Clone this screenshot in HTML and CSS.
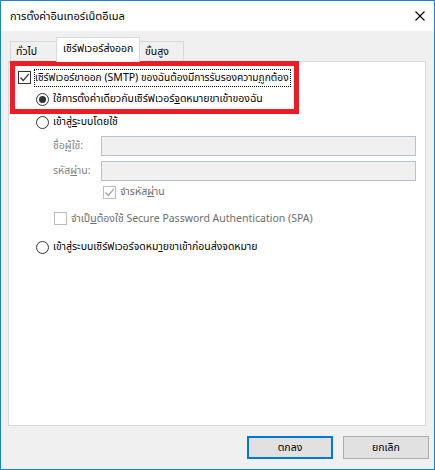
FILE: index.html
```html
<!DOCTYPE html>
<html lang="th">
<head>
<meta charset="utf-8">
<title>การตั้งค่าอินเทอร์เน็ตอีเมล</title>
<link rel="stylesheet" href="styles.css">
</head>
<body>
<div class="window">
  <div class="titlebar">
    <span class="title">การตั้งค่าอินเทอร์เน็ตอีเมล</span>
    <svg class="close" width="10" height="10" viewBox="0 0 10 10"><path d="M0.5 0.5 L9.5 9.5 M9.5 0.5 L0.5 9.5" stroke="#000" stroke-width="1.1" fill="none"/></svg>
  </div>
  <div class="body">
    <div class="tabs">
      <div class="tab first">ทั่วไป</div>
      <div class="tab selected">เซิร์ฟเวอร์ส่งออก</div>
      <div class="tab last">ขั้นสูง</div>
    </div>
    <div class="panel">
      <div class="row r1">
        <span class="cb checked"><svg width="11" height="11" viewBox="0 0 11 11"><path d="M1.5 5.5 L4.3 8.5 L9.8 1.8" stroke="#333" stroke-width="1.2" fill="none"/></svg></span>
        <span class="label focus">เซิร์ฟเวอร์ขาออก<span class="latin"> (SMTP) </span>ของฉันต้องมีการรับรองความ<u>ถ</u>ูกต้อง</span>
      </div>
      <div class="row r2 indent1">
        <span class="radio on"><span class="dot"></span></span>
        <span class="label">ใช้การตั้งค่าเดียวกับเซิร์ฟเวอร์<u>จ</u>ดหมายขาเข้าของฉัน</span>
      </div>
      <div class="row r3 indent1">
        <span class="radio"></span>
        <span class="label">เข้าสู่<u>ร</u>ะบบโดยใช้</span>
      </div>
      <div class="field f1">
        <span class="flabel">ชื่อ<u>ผู</u>้ใช้:</span>
        <span class="input"></span>
      </div>
      <div class="field f2">
        <span class="flabel">รหัส<u>ผ่</u>าน:</span>
        <span class="input"></span>
      </div>
      <div class="row r4 indent3">
        <span class="cb disabled"><svg width="11" height="11" viewBox="0 0 11 11"><path d="M1.5 5.5 L4.3 8.5 L9.8 1.8" stroke="#a3a3a3" stroke-width="1.2" fill="none"/></svg></span>
        <span class="label">จำรหัส<u>ผ่</u>าน</span>
      </div>
      <div class="row r5 indent2">
        <span class="cb disabled"></span>
        <span class="label gray">จำเป็<u>น</u>ต้องใช้<span class="latin"> Secure Password Authentication (SPA)</span></span>
      </div>
      <div class="row r6 indent1">
        <span class="radio"></span>
        <span class="label">เข้าสู่ระบบเซิร์ฟเวอร์จดหม<u>า</u>ยขาเข้าก่อนส่งจดหมาย</span>
      </div>
    </div>
    <div class="buttons">
      <div class="btn default">ตกลง</div>
      <div class="btn">ยกเลิก</div>
    </div>
  </div>
  <div class="highlight"></div>
</div>
</body>
</html>
```
FILE: styles.css
```css
* { box-sizing: border-box; }
html, body { margin: 0; padding: 0; background: #fff; }
body {
  font-family: "Noto Sans Thai", "Noto Sans", "DejaVu Sans", sans-serif;
  font-size: 10.5px;
  color: #000;
}
.latin { font-family: "Noto Sans", "DejaVu Sans", sans-serif; font-size: 10.5px; }
.window {
  position: relative;
  width: 435px;
  height: 470px;
  border: 1px solid #1883d7;
  display: flex;
  flex-direction: column;
  background: #f0f0f0;
}
.titlebar {
  height: 30px;
  background: #fff;
  display: flex;
  align-items: center;
  justify-content: space-between;
  padding: 0 9px 0 9px;
  flex: none;
}
.title { font-size: 11px; }
.body {
  flex: 1;
  display: flex;
  flex-direction: column;
  padding: 0 8px 0 7px;
}
.tabs {
  display: flex;
  align-items: flex-end;
  height: 30px;
  padding-left: 2px;
  flex: none;
}
.tab {
  height: 20px;
  border: 1px solid #d9d9d9;
  border-bottom: none;
  background: #f0f0f0;
  display: flex;
  align-items: center;
  padding: 0 0 0 5px;
  white-space: nowrap;
  flex: none;
}
.tab.first { width: 46px; border-right: none; }
.tab.selected {
  height: 25px;
  width: 84px;
  background: #fff;
  position: relative;
  top: 1px;
  padding: 0 0 3px 6px;
  z-index: 1;
}
.tab.last { width: 44px; border-left: none; }
.panel {
  height: 365px;
  background: #fff;
  border: 1px solid #d9d9d9;
  display: flex;
  flex-direction: column;
  padding: 9px 0 0 9px;
  flex: none;
}
.row {
  display: flex;
  align-items: center;
  height: 13px;
}
.indent1 { padding-left: 18px; }
.indent2 { padding-left: 36px; }
.indent3 { padding-left: 85px; }
.r2 { margin-top: 9px; }
.r3 { margin-top: 10px; }
.r4 { margin-top: 5px; }
.r5 { margin-top: 13px; }
.r6 { margin-top: 16px; }
.cb {
  width: 13px;
  height: 13px;
  border: 1px solid #333;
  background: #fff;
  flex: none;
  display: flex;
  align-items: center;
  justify-content: center;
}
.cb.disabled { border-color: #bcbcbc; }
.radio {
  width: 13px;
  height: 13px;
  border: 1px solid #333;
  border-radius: 50%;
  flex: none;
  display: flex;
  align-items: center;
  justify-content: center;
  background: #fff;
}
.radio .dot {
  width: 7px;
  height: 7px;
  border-radius: 50%;
  background: #333;
}
.label {
  margin-left: 4px;
  white-space: nowrap;
  line-height: 15px;
}
.label.focus {
  outline: 1px dotted #000;
  padding-right: 1px;
  font-size: 10.2px;
}
.label.gray { color: #6d6d6d; }
.r4 .label { color: #6d6d6d; }
.field {
  display: flex;
  align-items: center;
  height: 20px;
  padding-left: 35px;
}
.f1 { margin-top: 7px; }
.f2 { margin-top: 5px; }
.flabel {
  width: 48px;
  flex: none;
  color: #838383;
  white-space: nowrap;
}
.input {
  width: 315px;
  height: 20px;
  flex: none;
  border: 1px solid #b3c3d6;
  background: #f0f0f0;
}
.buttons {
  display: flex;
  justify-content: flex-end;
  gap: 10px;
  padding-top: 10px;
  margin-right: -3px;
}
.btn {
  width: 86px;
  height: 23px;
  background: #e1e1e1;
  border: 1px solid #adadad;
  display: flex;
  align-items: center;
  justify-content: center;
}
.btn.default { border: 2px solid #0078d7; }
.highlight {
  position: absolute;
  left: 9px;
  top: 60px;
  width: 289px;
  height: 53px;
  border: 5px solid #ed1c24;
  pointer-events: none;
}
```
